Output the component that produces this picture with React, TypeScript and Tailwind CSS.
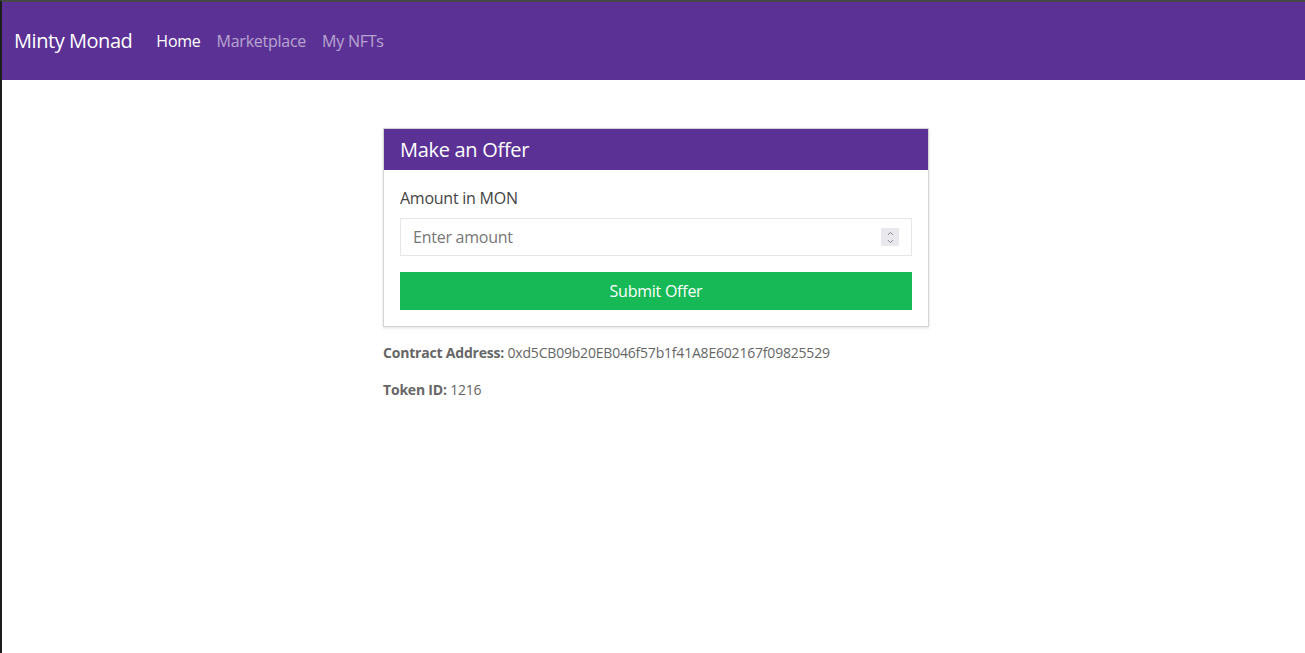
import { ChevronDown, ChevronUp } from "lucide-react";

const font = { fontFamily: '"Open Sans", "Noto Sans", sans-serif' };

const App = () => (
  <div
    className="min-h-[653px] bg-white border-t-2 border-l-2 border-t-[#474747] border-l-[#1c1c1c] text-[#333]"
    style={font}
  >
    <nav className="h-[78px] bg-[#5b3195] flex items-center px-3">
      <span className="text-[20px] text-white mr-[24px] tracking-[-0.45px]">Minty Monad</span>
      <div className="flex items-center gap-4 text-[16px] tracking-[-0.25px]">
        <a className="text-white">Home</a>
        <a className="text-white/55">Marketplace</a>
        <a className="text-white/55">My NFTs</a>
      </div>
    </nav>

    <main className="flex justify-center pl-[5px] pt-12">
      <div className="w-[546px]">
        <div className="border border-[#d4d4d4] shadow-[0_1px_3px_rgba(0,0,0,0.12)]">
          <div className="h-[41px] bg-[#5b3195] flex items-center px-4">
            <h2 className="text-[20px] text-white tracking-[-0.3px]">Make an Offer</h2>
          </div>
          <div className="px-4 pt-[17px] pb-4">
            <label className="block text-[16px] text-[#444] leading-[22px] tracking-[-0.25px]">Amount in MON</label>
            <div className="mt-[9px] h-[38px] border border-[#e6e6e6] flex items-center pl-3 pr-3">
              <input
                type="text"
                placeholder="Enter amount"
                className="flex-1 outline-none text-[16px] tracking-[-0.25px] placeholder:text-[#777]"
                style={font}
              />
              <div className="w-[18px] h-[18px] bg-[#e9e9ed] flex flex-col items-center justify-center text-[#7d7d85]">
                <ChevronUp className="w-[11px] h-[9px] -mb-[1px]" strokeWidth={2.5} />
                <ChevronDown className="w-[11px] h-[9px]" strokeWidth={2.5} />
              </div>
            </div>
            <button
              className="mt-4 w-full h-[38px] bg-[#16b955] text-white text-[16px] tracking-[-0.25px]"
              style={font}
            >
              Submit Offer
            </button>
          </div>
        </div>

        <p className="mt-[15px] text-[14px] text-[#666] tracking-[-0.2px]">
          <span className="font-bold">Contract Address:</span> 0xd5CB09b20EB046f57b1f41A8E602167f09825529
        </p>
        <p className="mt-[16px] text-[14px] text-[#666] tracking-[-0.2px]">
          <span className="font-bold">Token ID:</span> 1216
        </p>
      </div>
    </main>
  </div>
);

export default App;
